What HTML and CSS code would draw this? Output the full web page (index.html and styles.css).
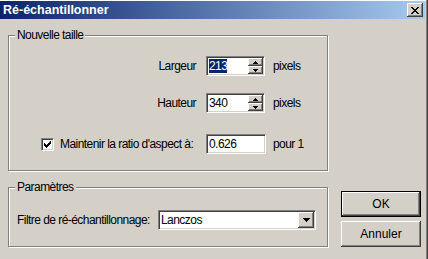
FILE: index.html
```html
<!DOCTYPE html>
<html lang="fr">
<head>
  <meta charset="UTF-8" />
  <title>Ré-échantillonner</title>
  <link rel="stylesheet" href="styles.css">
</head>
<body>
  <div class="window">
    <div class="titlebar">
      <span class="title">Ré-échantillonner</span>
      <span class="close">
        <svg width="8" height="7" viewBox="0 0 8 7"><path d="M0 0h2v1h-2zM6 0h2v1h-2zM1 1h2v1h-2zM5 1h2v1h-2zM2 2h4v1h-4zM3 3h2v1h-2zM2 4h4v1h-4zM1 5h2v1h-2zM5 5h2v1h-2zM0 6h2v1h-2zM6 6h2v1h-2z" fill="#000"/></svg>
      </span>
    </div>

    <div class="content">
      <div class="groups">
        <div class="group size">
          <span class="legend">Nouvelle taille</span>

          <div class="row">
            <span class="label">Largeur</span>
            <div class="edit spin">
              <span class="value"><span class="sel">213</span></span>
              <div class="spinner">
                <span class="spin-btn"><svg width="5" height="3" viewBox="0 0 5 3"><path d="M2 0h1v1h1v1h1v1h-5v-1h1v-1h1z" fill="#000"/></svg></span>
                <span class="spin-btn"><svg width="5" height="3" viewBox="0 0 5 3"><path d="M0 0h5v1h-1v1h-1v1h-1v-1h-1v-1h-1z" fill="#000"/></svg></span>
              </div>
            </div>
            <span class="unit">pixels</span>
          </div>

          <div class="row">
            <span class="label">Hauteur</span>
            <div class="edit spin">
              <span class="value">340</span>
              <div class="spinner">
                <span class="spin-btn"><svg width="5" height="3" viewBox="0 0 5 3"><path d="M2 0h1v1h1v1h1v1h-5v-1h1v-1h1z" fill="#000"/></svg></span>
                <span class="spin-btn"><svg width="5" height="3" viewBox="0 0 5 3"><path d="M0 0h5v1h-1v1h-1v1h-1v-1h-1v-1h-1z" fill="#000"/></svg></span>
              </div>
            </div>
            <span class="unit">pixels</span>
          </div>

          <div class="row ratio-row">
            <span class="check-label">
              <span class="checkbox">
                <svg width="7" height="7" viewBox="0 0 7 7"><path d="M6 0h1v3h-1v1h-1v1h-1v1h-1v1h-1v-1h-1v-1h-1v-3h1v1h1v1h1v-1h1v-1h1z" fill="#000"/></svg>
              </span>
              Maintenir la ratio d'aspect à:
            </span>
            <div class="edit ratio">
              <span class="value">0.626</span>
            </div>
            <span class="unit ratio-unit">pour 1</span>
          </div>
        </div>

        <div class="group params">
          <span class="legend">Paramètres</span>
          <div class="row">
            <span class="filter-label">Filtre de ré-échantillonnage:</span>
            <div class="edit combo">
              <span class="value">Lanczos</span>
              <span class="drop-btn"><svg width="7" height="4" viewBox="0 0 7 4"><path d="M0 0h7v1h-1v1h-1v1h-1v1h-1v-1h-1v-1h-1v-1h-1z" fill="#000"/></svg></span>
            </div>
          </div>
        </div>
      </div>

      <div class="buttons">
        <button class="btn default">OK</button>
        <button class="btn">Annuler</button>
      </div>
    </div>
  </div>
</body>
</html>
```

FILE: styles.css
```css
body {
  margin: 0;
  background-color: #d4d0c8;
  font-family: "Liberation Sans", Arial, sans-serif;
  font-size: 12px;
  letter-spacing: -0.55px;
  white-space: nowrap;
  color: #000;
}
.window {
  width: 428px;
  height: 259px;
  box-sizing: border-box;
  padding: 1px 3px 0 0;
  overflow: hidden;
  box-shadow: inset -1px 0 0 #404040, inset -2px 0 0 #808080, inset 0 1px 0 #fff;
}
.titlebar {
  height: 18px;
  display: flex;
  align-items: center;
  justify-content: space-between;
  padding: 0 2px 0 3px;
  background: linear-gradient(to right, #0a246a, #a6caf0);
}
.title {
  font-weight: bold;
  font-size: 12.5px;
  letter-spacing: 0;
  color: #fff;
}
.close {
  width: 16px;
  height: 14px;
  display: flex;
  align-items: center;
  justify-content: center;
  background: #d4d0c8;
  box-shadow: inset -1px -1px 0 #404040, inset 1px 1px 0 #fff, inset -2px -2px 0 #808080;
}
.content {
  display: flex;
  padding: 16px 0 0 8px;
}
.groups {
  width: 320px;
  display: flex;
  flex-direction: column;
  gap: 16px;
}
.group {
  position: relative;
  box-sizing: border-box;
  border: 1px solid #808080;
  box-shadow: inset 1px 1px 0 #fff, 1px 1px 0 #fff;
}
.legend {
  position: absolute;
  top: -8px;
  left: 6px;
  padding: 0 2px;
  line-height: 14px;
  background: #d4d0c8;
}
.size {
  height: 136px;
  padding-top: 20px;
}
.params {
  height: 60px;
  padding: 22px 0 0 8px;
}
.row {
  display: flex;
  align-items: center;
  height: 20px;
}
.row + .row {
  margin-top: 17px;
}
.row.ratio-row {
  margin-top: 21px;
}
.label {
  width: 187px;
  margin-right: 10px;
  text-align: right;
}
.check-label {
  width: 187px;
  margin-right: 10px;
  box-sizing: border-box;
  padding-left: 32px;
  display: flex;
  align-items: center;
}
.checkbox {
  width: 13px;
  height: 13px;
  box-sizing: border-box;
  margin-right: 6px;
  display: flex;
  align-items: center;
  justify-content: center;
  background: #fff;
  border: 1px solid;
  border-color: #808080 #fff #fff #808080;
  box-shadow: inset 1px 1px 0 #404040, inset -1px -1px 0 #d4d0c8;
}
.edit {
  box-sizing: border-box;
  height: 20px;
  display: flex;
  padding: 1px;
  background: #fff;
  border: 1px solid;
  border-color: #808080 #fff #fff #808080;
  box-shadow: inset 1px 1px 0 #404040, inset -1px -1px 0 #d4d0c8;
}
.value {
  flex: 1;
  line-height: 16px;
  padding-left: 1px;
}
.sel {
  background: #0a246a;
  color: #fff;
}
.spin {
  width: 59px;
}
.ratio {
  width: 60px;
}
.spinner {
  width: 15px;
  display: flex;
  flex-direction: column;
}
.spin-btn, .drop-btn {
  display: flex;
  align-items: center;
  justify-content: center;
  background: #d4d0c8;
  box-shadow: inset -1px -1px 0 #404040, inset 1px 1px 0 #fff, inset -2px -2px 0 #808080;
}
.spin-btn {
  height: 8px;
}
.drop-btn {
  width: 16px;
}
.unit {
  margin-left: 8px;
}
.ratio-unit {
  margin-left: 7px;
}
.filter-label {
  width: 141px;
}
.combo {
  width: 158px;
}
.buttons {
  display: flex;
  flex-direction: column;
  gap: 4px;
  margin-left: 13px;
  align-self: flex-end;
}
.btn {
  width: 80px;
  height: 26px;
  padding: 0;
  border: none;
  font: inherit;
  color: #000;
  background: #d4d0c8;
  box-shadow: inset -1px -1px 0 #404040, inset 1px 1px 0 #fff, inset -2px -2px 0 #808080;
}
.btn.default {
  box-shadow: inset 0 0 0 1px #000, inset -2px -2px 0 #404040, inset 2px 2px 0 #fff, inset -3px -3px 0 #808080;
}
```
